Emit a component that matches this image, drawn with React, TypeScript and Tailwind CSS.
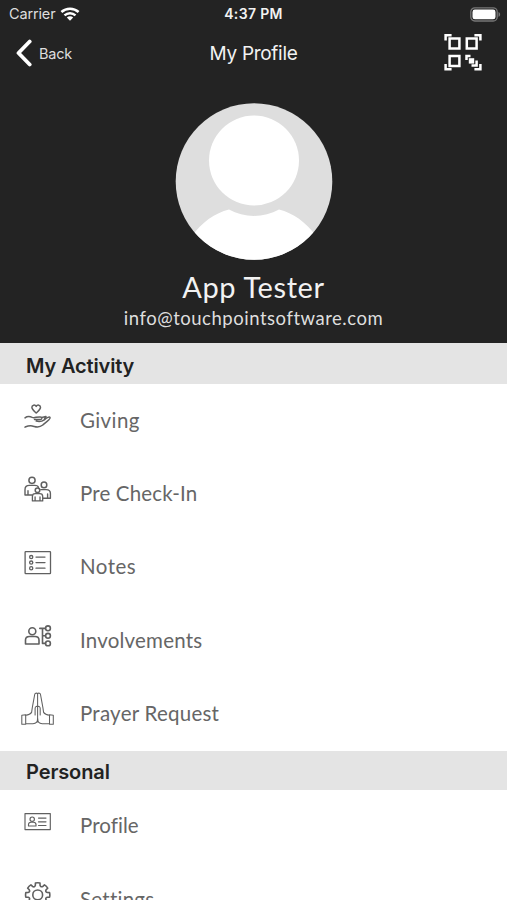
import type { ReactNode } from "react";

const gearPath = (() => {
  const teeth = 8;
  const points: string[] = [];
  for (let i = 0; i < teeth; i++) {
    const base = (i * 2 * Math.PI) / teeth - Math.PI / 2;
    const at = (radius: number, offset: number) =>
      `${(17.7 + radius * Math.cos(base + offset)).toFixed(2)} ${(17.9 + radius * Math.sin(base + offset)).toFixed(2)}`;
    points.push(
      `${i === 0 ? "M" : "L"}${at(9.9, -0.24)} L${at(12.1, -0.19)} Q${at(12.4, 0)} ${at(12.1, 0.19)} L${at(9.9, 0.24)} Q${at(7.9, 0.39)} ${at(9.9, 0.545)}`,
    );
  }
  return points.join(" ") + "Z";
})();

function Icon({ children, stroke = 1.5 }: { children: ReactNode; stroke?: number }) {
  return (
    <svg
      viewBox="0 0 36 36"
      className="mb-[9px] ml-5 h-9 w-9 shrink-0 text-[#606060]"
      fill="none"
      stroke="currentColor"
      strokeWidth={stroke}
      strokeLinecap="round"
      strokeLinejoin="round"
    >
      {children}
    </svg>
  );
}

const GivingIcon = () => (
  <Icon>
    <path d="M16.2 15C14.5 13.4 11.9 11.5 11.9 9.3C11.9 6.9 15 6.3 16.2 8.4C17.4 6.3 20.5 6.9 20.5 9.3C20.5 11.5 17.9 13.4 16.2 15Z" />
    <path d="M5 19.9C8 17.6 10.3 18.6 12.3 19.4C14.8 20.3 16.5 18.7 20.2 18.9C22.8 19 22.4 21.5 20 21.5H14.5M16.2 23.1C20 24 22 23.5 24.3 21.8C27 19.7 29.4 18.2 30.1 19.5C30.7 20.8 26.2 24.3 22.8 27C18.3 30.6 15.5 28.5 12.2 27.9C9.2 27.3 7.6 28 5 29.1M21.7 19.5L26 18.5L24.4 21.1" />
  </Icon>
);

const FamilyIcon = () => (
  <Icon>
    <circle cx="12" cy="9.3" r="3.1" />
    <circle cx="24" cy="13.9" r="2.8" />
    <circle cx="17.5" cy="19.2" r="2.3" />
    <path d="M12 24H5V18.7C5 15.4 6.7 14.4 9.2 14.4H14.7C17.2 14.4 18.3 15.5 18.4 16.5M20.8 18.6H26.2C29.2 18.6 30.4 19.9 30.4 22.5V27.3H23M8 19.8V23.5M27.6 22.9V26.9" strokeWidth="1.4" />
    <path d="M12.4 29.9V25.5C12.4 23.4 13.5 22.7 15.2 22.7H19.8C21.7 22.7 22.7 23.6 22.7 25.5V29.9ZM15.1 25.9V29.5M20 25.9V29.5" strokeWidth="1.3" />
  </Icon>
);

const NotesIcon = () => (
  <Icon stroke={1.3}>
    <rect x="5.1" y="6.6" width="25.4" height="22" rx="0.6" />
    <circle cx="11.2" cy="12.1" r="1.6" />
    <circle cx="11.2" cy="17.6" r="1.6" />
    <circle cx="11.2" cy="23.2" r="1.6" />
    <path d="M16 12.1H25M16 17.6H25M16 23.2H25" />
  </Icon>
);

const InvolvementsIcon = () => (
  <Icon stroke={1.6}>
    <circle cx="12.3" cy="13.3" r="3.5" />
    <path d="M5.5 26V22C5.5 19.7 7.2 18.5 9.4 18.5H15C17.4 18.5 19 19.9 19 22V26Z" />
    <path d="M19.8 10.4H25.2M22.5 10.4V25.4H25.2M22.5 17.8H25.2" />
    <circle cx="28" cy="10.3" r="2.4" />
    <circle cx="28" cy="17.8" r="2.4" />
    <circle cx="28" cy="25.4" r="2.4" />
  </Icon>
);

const PrayerIcon = () => (
  <Icon stroke={1.05}>
    <path d="M17.6 2.4C16.3 1.8 15 2.2 14.7 3.5L12.3 16.6L11.6 21.4Q10 23.8 5.7 24.2M17.6 2.4C18.9 1.8 20.2 2.2 20.5 3.5L22.9 16.6L23.6 21.4Q25.2 23.8 29.5 24.2M17.6 2.4V31M15.1 23.9V17.5C15.1 15.8 16.4 14.9 17.6 15.7C18.8 14.9 20.2 15.8 20.2 17.5V23.9" />
    <path d="M1.8 24.2L5.7 23.8V33.2H1.8ZM29.5 23.8L33.3 24.2V33.2H29.5ZM5.7 32.7H13C15.8 32.7 17.6 31 17.6 27.6M29.5 32.7H22.2C19.4 32.7 17.6 31 17.6 27.6" />
  </Icon>
);

const ProfileIcon = () => (
  <Icon stroke={1.15}>
    <rect x="5" y="9.6" width="25.3" height="16" />
    <circle cx="12.2" cy="15.2" r="2.2" />
    <path d="M8.5 22V20.4C8.5 19 9.5 18.3 11 18.2H13.4C15 18.3 16 19 16 20.4V22ZM18.5 14.1H26M18.5 17.8H26M18.5 21.5H26" />
  </Icon>
);

const SettingsIcon = () => (
  <Icon stroke={1.6}>
    <path d={gearPath} />
    <circle cx="17.7" cy="17.9" r="4.9" />
  </Icon>
);

function Row({ icon, label, spacing }: { icon: ReactNode; label: string; spacing: string }) {
  return (
    <li className="flex h-[73.33px] items-center">
      {icon}
      <span className={`mb-[2px] ml-6 font-['Lato'] text-[20.5px] leading-7 whitespace-nowrap text-[#666] ${spacing}`}>{label}</span>
    </li>
  );
}

export default function App() {
  return (
    <div className="h-[900px] w-full overflow-hidden bg-white font-['Inter',sans-serif]">
      <header className="h-[343px] bg-[#232323] text-[#f2f2f2]">
        <div className="grid h-7 grid-cols-3 items-center leading-5">
          <div className="flex items-center gap-[6px] pl-[9px] text-[#dedede]">
            <span className="text-[14.5px] tracking-[-0.15px]">Carrier</span>
            <svg viewBox="0 0 20 14" className="h-[14px] w-5 -translate-x-px" fill="none" stroke="#fff" strokeWidth="2.5">
              <path d="M1.4 5C6.3.5 13.7.5 18.6 5M4.5 8.4C7.7 5.5 12.3 5.5 15.5 8.4" />
              <path d="M6.8 10.5C8.6 8.8 11.4 8.8 13.2 10.5L10 13.8Z" fill="#fff" stroke="none" />
            </svg>
          </div>
          <div className="text-center text-[14px] font-semibold tracking-[0.35px] whitespace-nowrap">4:37 PM</div>
          <div className="flex justify-end pr-[6px]">
            <svg viewBox="0 0 31 15" className="h-[15px] w-[31px]">
              <rect x="0.8" y="0.8" width="26.4" height="13.2" rx="4" fill="none" stroke="#777" strokeWidth="1.3" />
              <rect x="2.5" y="2.5" width="23" height="9.8" rx="2.4" fill="#fff" />
              <path d="M28.5 5C30.7 5.8 30.7 9 28.5 9.8Z" fill="#777" />
            </svg>
          </div>
        </div>
        <nav className="grid h-[50px] grid-cols-3 items-center">
          <div className="flex items-center gap-[6px] pl-[16px] text-[#dedede]">
            <svg viewBox="0 0 17 28" className="h-7 w-[17px]" fill="none" stroke="#fff" strokeWidth="3.8" strokeLinecap="round" strokeLinejoin="round">
              <path d="M13.7 2.5L2.5 14L13.7 25.5" />
            </svg>
            <span className="pt-px text-[14.5px] tracking-[-0.2px]">Back</span>
          </div>
          <h1 className="pt-[2px] text-center text-[19px] leading-6 tracking-[-0.3px] whitespace-nowrap">My Profile</h1>
          <div className="flex justify-end pr-6">
            <svg viewBox="0 0 40 40" className="h-10 w-10" fill="none" stroke="#fff" strokeWidth="2.5">
              <path d="M2.6 7.5V2.2H8.6M31.4 2.2H37.4V7.5M2.6 31V36.3H8.6M31.4 36.3H37.4V31" />
              <path d="M6.6 5.6H16.4V15.4H6.6ZM23.8 5.6H33.6V15.4H23.8ZM6.6 23.1H16.4V32.9H6.6Z" />
              <path d="M23.5 26.9V23.1H27.5M28.5 32.6H33.6V27.5" />
              <rect x="25.8" y="25.2" width="5.4" height="5.4" fill="#fff" stroke="none" />
            </svg>
          </div>
        </nav>
        <div className="flex flex-col items-center pt-[25px]">
          <svg viewBox="0 0 158 158" className="h-[158px] w-[158px]">
            <defs>
              <clipPath id="avatar"><circle cx="79" cy="78.5" r="78.3" /></clipPath>
            </defs>
            <g clipPath="url(#avatar)">
              <rect width="158" height="158" fill="#dedede" />
              <circle cx="79" cy="57.5" r="45" fill="#fff" />
              <path d="M17 133C27 119 40 110 54 106.5C69 115 89 115 104 106.5C118 110 131 119 141 133V158H17Z" fill="#fff" />
            </g>
          </svg>
          <div className="mt-[8px] font-['Lato'] text-[29px] leading-9 tracking-[0.6px]">App Tester</div>
          <div className="mt-px font-['Lato'] text-[18.5px] leading-6 tracking-[0.52px] text-[#dedede]">info@touchpointsoftware.com</div>
        </div>
      </header>
      <h2 className="flex h-[41px] items-center bg-[#e4e4e4] pt-[4px] pl-[26px] text-[20px] font-semibold tracking-[-0.15px] text-[#222]">My Activity</h2>
      <ul>
        <Row icon={<GivingIcon />} label="Giving" spacing="tracking-[0.4px]" />
        <Row icon={<FamilyIcon />} label="Pre Check-In" spacing="tracking-[0.15px]" />
        <Row icon={<NotesIcon />} label="Notes" spacing="tracking-[0.45px]" />
        <Row icon={<InvolvementsIcon />} label="Involvements" spacing="tracking-[0.2px]" />
        <Row icon={<PrayerIcon />} label="Prayer Request" spacing="tracking-[0.25px]" />
      </ul>
      <h2 className="flex h-[39px] items-center bg-[#e4e4e4] pt-[3px] pl-[26px] text-[20px] font-semibold tracking-[-0.1px] text-[#222]">Personal</h2>
      <ul>
        <Row icon={<ProfileIcon />} label="Profile" spacing="tracking-[0.05px]" />
        <Row icon={<SettingsIcon />} label="Settings" spacing="tracking-[0.25px]" />
      </ul>
    </div>
  );
}
